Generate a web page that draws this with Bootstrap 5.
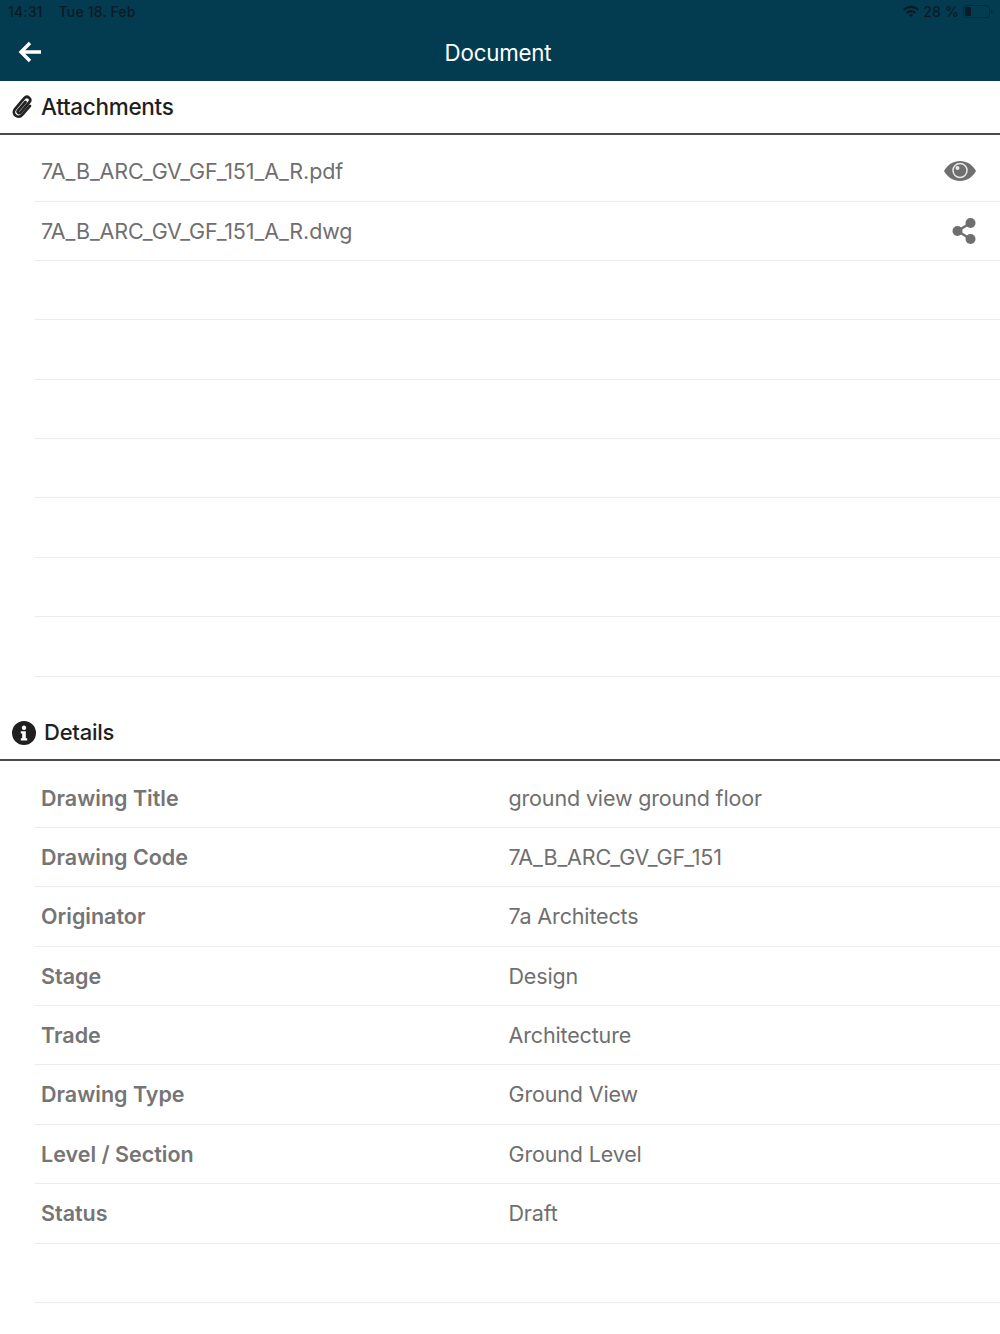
<!DOCTYPE html>
<html lang="en">
<head>
    <meta charset="UTF-8">
    <title>Document</title>
    <link href="https://cdn.jsdelivr.net/npm/bootstrap@5.3.0/dist/css/bootstrap.min.css" rel="stylesheet">
    <style>
        html, body { height: 1334px; overflow: hidden; }
        body { font-family: Inter, "Noto Sans", sans-serif; background: #fff; }
        .app-bar { background: #033c50; height: 81px; }
        .status-line { height: 24px; padding: 0 6px 2px 8px; font-size: 14px; font-weight: 500; letter-spacing: .15px; color: #0a1a24; }
        .title-line { height: 57px; padding-left: 18px; color: #fff; }
        .back-arrow { margin-bottom: 2px; }
        .title-text { font-size: 22.3px; letter-spacing: -.2px; margin-left: -2px; }
        .section-head { border-bottom: 2px solid #4a4a4a; padding-left: 12px; color: #1f1f1f; font-weight: 550; }
        .head-att { height: 54px; font-size: 22.5px; letter-spacing: -.3px; }
        .head-det { height: 55px; font-size: 22px; letter-spacing: -.25px; padding-top: 1px; }
        .rows { margin-left: 35px; }
        .row-item { height: 59.4px; border-bottom: 1px solid #ececec; padding: 0 24px 0 6px; font-size: 21.5px; color: #6f6f6f; letter-spacing: -.15px; }
        .row-item.first-row { height: 66.5px; padding-top: 7px; }
        .file-name { letter-spacing: -.1px; }
        .row-label { width: 467.5px; font-weight: 600; color: #757575; letter-spacing: 0; }
        .gap-block { height: 29px; }
        .rows-det .first-row { height: 67.2px; padding-top: 8px; }
    </style>
</head>
<body>

<div class="app-bar">
    <div class="status-line d-flex align-items-center justify-content-between">
        <div class="d-flex gap-3"><span>14:31</span><span>Tue 18. Feb</span></div>
        <div class="d-flex align-items-center gap-1">
            <svg width="16" height="12" viewBox="0 0 16 12" fill="#0a1a24"><path d="M0 4.2C4.4-.4 11.6-.4 16 4.2l-1.5 1.6C10.900 2.200 5.100 2.200 1.500 5.800z"/><path d="M3 7.200c2.800-2.800 7.200-2.800 10 0l-1.600 1.600c-1.900-1.900-4.900-1.900-6.800 0z"/><path d="M8 12 5.800 9.800c1.200-1.200 3.200-1.200 4.400 0z"/></svg>
            <span>28 %</span>
            <svg width="31" height="13" viewBox="0 0 31 13"><rect x=".5" y=".5" width="26" height="12" rx="3" fill="none" stroke="#0a1a24" stroke-opacity=".55"/><rect x="2" y="2" width="6" height="9" rx="1" fill="#0a1c26"/><path d="M28 4.500c1.200.3 1.600 1.100 1.600 2s-.4 1.700-1.600 2z" fill="#0a1a24" fill-opacity=".55"/></svg>
        </div>
    </div>
    <div class="title-line d-flex align-items-center position-relative">
        <svg class="back-arrow" width="24" height="22" viewBox="0 0 24 22" fill="none" stroke="#fff" stroke-width="3.400"><path d="M23 11H3M12 2l-9 9 9 9"/></svg>
        <span class="title-text position-absolute top-50 start-50 translate-middle">Document</span>
    </div>
</div>

<div class="section-head head-att d-flex align-items-center gap-2">
    <svg width="21" height="24" viewBox="0 0 21 24" fill="none" stroke="#222" stroke-width="2.700" stroke-linecap="round"><path d="M13.500 7 6 15.500c-1.300 1.600 1 3.600 2.400 2.100l8.800-10.200c3-3.500-1.800-7.700-4.900-4.200L3.200 13.800c-4.200 5 2.700 11 7 6.100l7.800-9"/></svg>
    <span>Attachments</span>
</div>

<div class="rows">
    <div class="row-item first-row d-flex align-items-center justify-content-between">
        <span class="file-name">7A_B_ARC_GV_GF_151_A_R.pdf</span>
        <svg width="32" height="22" viewBox="0 0 32 22"><path d="M0 11C3.500 4.500 9.500 1 16 1s12.500 3.500 16 10c-3.500 6.500-9.500 10-16 10S3.500 17.500 0 11z" fill="#6f6f6f"/><circle cx="16" cy="10.500" r="7" fill="none" stroke="#e8e8e8" stroke-width="1.500"/><circle cx="16" cy="10.500" r="5.200" fill="#6f6f6f"/><circle cx="13.500" cy="8" r="2" fill="#e8e8e8"/></svg>
    </div>
    <div class="row-item d-flex align-items-center justify-content-between">
        <span class="file-name">7A_B_ARC_GV_GF_151_A_R.dwg</span>
        <svg width="24" height="28" viewBox="0 0 24 28" fill="#6f6f6f" stroke="#6f6f6f"><circle cx="5.500" cy="14" r="5" stroke="none"/><circle cx="18.500" cy="6" r="5" stroke="none"/><circle cx="18.500" cy="22" r="5" stroke="none"/><path d="M5.500 14 18.500 6M5.500 14l13 8" stroke-width="2.500"/></svg>
    </div>
    <div class="row-item"></div>
    <div class="row-item"></div>
    <div class="row-item"></div>
    <div class="row-item"></div>
    <div class="row-item"></div>
    <div class="row-item"></div>
    <div class="row-item"></div>
</div>

<div class="gap-block"></div>

<div class="section-head head-det d-flex align-items-center gap-2">
    <svg width="24" height="24" viewBox="0 0 24 24"><circle cx="12" cy="12" r="12" fill="#1f1f1f"/><circle cx="12" cy="6.800" r="2.200" fill="#fff"/><path d="M8.800 10.200h5v7h1.400v2.200H8.800v-2.200h1.400v-4.800H8.800z" fill="#fff"/></svg>
    <span>Details</span>
</div>

<div class="rows rows-det">
    <div class="row-item first-row d-flex align-items-center"><span class="row-label">Drawing Title</span><span>ground view ground floor</span></div>
    <div class="row-item d-flex align-items-center"><span class="row-label">Drawing Code</span><span class="file-name">7A_B_ARC_GV_GF_151</span></div>
    <div class="row-item d-flex align-items-center"><span class="row-label">Originator</span><span>7a Architects</span></div>
    <div class="row-item d-flex align-items-center"><span class="row-label">Stage</span><span>Design</span></div>
    <div class="row-item d-flex align-items-center"><span class="row-label">Trade</span><span>Architecture</span></div>
    <div class="row-item d-flex align-items-center"><span class="row-label">Drawing Type</span><span>Ground View</span></div>
    <div class="row-item d-flex align-items-center"><span class="row-label">Level / Section</span><span>Ground Level</span></div>
    <div class="row-item d-flex align-items-center"><span class="row-label">Status</span><span>Draft</span></div>
    <div class="row-item"></div>
</div>

<script src="https://cdn.jsdelivr.net/npm/bootstrap@5.3.0/dist/js/bootstrap.bundle.min.js"></script>
</body>
</html>
